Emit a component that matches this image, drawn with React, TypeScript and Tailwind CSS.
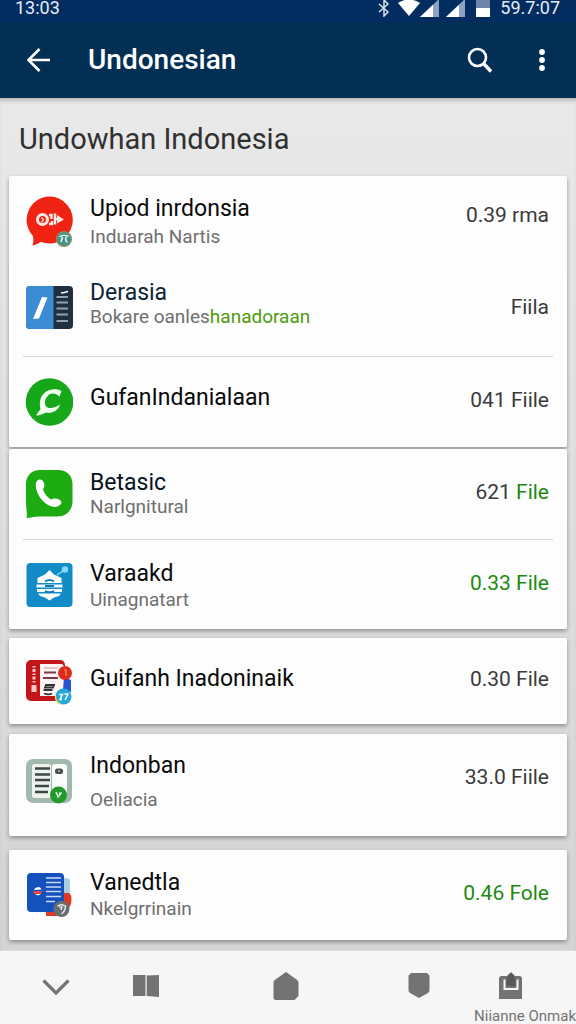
import React from "react";
import clsx from "clsx";

interface FileItem {
  id: string;
  title: string;
  subtitle?: React.ReactNode;
  value: React.ReactNode;
  icon: React.ReactNode;
  rowClass: string;
  textClass?: string;
  titleClass?: string;
  subtitleClass?: string;
  valueClass?: string;
}

const IconBox = ({ children }: { children: React.ReactNode }) => (
  <svg viewBox="0 0 48 52" className="h-[52px] w-12 shrink-0" aria-hidden="true">
    {children}
  </svg>
);

const RedChatIcon = () => (
  <IconBox>
    <path d="M24.500 1.500a23.500 23.500 0 1 1-9 45.300C13 49 10 50 7.500 50.500c1-3 1-7 .4-9.500A23.500 23.500 0 0 1 24.500 1.500z" fill="#f02312" />
    <circle cx="17.500" cy="24.500" r="5" fill="none" stroke="#ffe9e4" strokeWidth="3" />
    <path d="M16.500 22.500l2 2-2 3" fill="none" stroke="#ffe9e4" strokeWidth="1.200" />
    <path d="M24 20h2.500v4M24 29h3v-3M30 18.500v11M29 24h5" fill="none" stroke="#ffe9e4" strokeWidth="2.400" />
    <path d="M32 20l7 4.500-7 4z" fill="#ffe9e4" />
    <circle cx="39" cy="44" r="8" fill="#8a8c66" />
    <circle cx="39" cy="44" r="6.600" fill="#3f9488" />
    <path d="M34.500 42c2-2 6-2 9-.5M37.500 42l-1.500 5M41 42c-.5 2-.5 5 1.500 5" fill="none" stroke="#e4f3ec" strokeWidth="1.600" />
  </IconBox>
);

const NotebookIcon = () => (
  <IconBox>
    <rect x="1" y="5" width="47" height="43" rx="4" fill="#1f2f40" />
    <path d="M5 5h23.500v43H5a4 4 0 0 1-4-4V9a4 4 0 0 1 4-4z" fill="#3c8bd3" />
    <path d="M17 16l5.500.5L14 37.500 8 38z" fill="#fff" />
    <path d="M36 11.500c2 1 4-.5 7-1" fill="none" stroke="#fff" strokeWidth="1.500" />
    <path d="M31.500 16H43M31.500 21.500H43M31.500 27.500H43M31.500 33.500H43M31.500 40H43" stroke="#92a2b0" strokeWidth="1.800" />
  </IconBox>
);

const GreenSwirlIcon = () => (
  <IconBox>
    <circle cx="24.500" cy="26" r="23.800" fill="#17a81a" />
    <path d="M34.500 20.500l2-5.500c-4-2.500-11-2.500-16 1-5.500 4-6.500 11-5 17l-4.500 6.500c4 0 7-1.500 10-3 5 .8 10-.5 13-5.500l1-2.500c-3.500 2.500-8.500 4.500-12.500 3-4-2-3-9 1-12.500 3.500-2.500 7.500-1.500 11 1.500z" fill="#f3fff0" />
  </IconBox>
);

const PhoneBubbleIcon = () => (
  <IconBox>
    <path d="M15 2h18c9 0 14.500 6 14.500 14v17c0 9-6 15.500-15 15.500H14c-4 .2-9 1.300-12.500 1.500C2.500 46 1 40 1 34V16C1 8 6.500 2 15 2z" fill="#1cab10" />
    <path d="M12 13c2-2 5-2 6.500 1 1.300 3 1.300 5-.5 7 .8 4 4 8 8 10.500 2.500-1.500 5-1.500 8.500.2 2.500 1.500 2.500 3.500.5 5.300-3 2.500-7 2.500-11 .5C17 34 12.500 27 11 20c-.5-3-.5-5 1-7z" fill="#fff" />
  </IconBox>
);

const BlueBadgeIcon = () => (
  <IconBox>
    <rect x="1.500" y="4" width="46" height="44" rx="4" fill="#128bc6" />
    <path d="M24.500 11l4.500 4.500 7.500 3.500v5h-24v-5l7.500-3.500z" fill="#fff" />
    <path d="M11.500 25.500h26v3h-26zM12 30h25v3H12z" fill="#f0fbff" />
    <path d="M13 34.500h23l-2 2.500-5 1.500-4.500 3-4.500-3-5-1.500z" fill="#fff" />
    <path d="M20 22.500q4.500-3 9 0M20 27h9M20 32q4.500 2.500 9 0" fill="none" stroke="#167ab0" strokeWidth="1.800" />
    <path d="M32 16.500c1.500-3 3-1.500 5.500-4.500" fill="none" stroke="#6fd5f5" strokeWidth="1.600" />
    <circle cx="40" cy="10.500" r="3.200" fill="#7fdcf8" />
  </IconBox>
);

const RedPaperIcon = () => (
  <IconBox>
    <rect x="1" y="5" width="39" height="41" rx="5" fill="#c3161b" />
    <path d="M15 9h22l4 4v28H15z" fill="#fbf6f5" />
    <path d="M9 11v17" stroke="#f5c9c6" strokeWidth="3" strokeDasharray="1.500 1.500 3 1.500" />
    <path d="M6.500 30h5v7h-5z" fill="#f5c9c6" />
    <path d="M19 13h14" stroke="#d5a9a9" strokeWidth="1.200" />
    <path d="M19 17.500h12M18 23h15" stroke="#7d3b4a" strokeWidth="2" />
    <path d="M21 30h8l-1 2.500h-8zM18.500 35h9M19 38.500c3 1 6 1 8 0" fill="none" stroke="#333" strokeWidth="1.800" />
    <path d="M39 22l7 3v12l-8-2z" fill="#2b53cf" />
    <circle cx="40" cy="18" r="7" fill="#dc2c1d" />
    <path d="M39 15h2v6" fill="none" stroke="#f29a52" strokeWidth="1.200" />
    <circle cx="38.500" cy="41.500" r="8" fill="#22a7d8" />
    <path d="M30.500 41a8 8 0 0 0 5 8" fill="none" stroke="#e6d34c" strokeWidth="1.400" />
    <path d="M34 39.500h3.500l-2.500 5h2M39.500 39h3.500l-3 6" fill="none" stroke="#fff" strokeWidth="1.500" />
  </IconBox>
);

const GreyNewsIcon = () => (
  <IconBox>
    <rect x="1" y="4" width="46" height="44" rx="7" fill="#a4b9ad" />
    <rect x="7" y="9" width="19" height="34" rx="2" fill="#eef3ef" />
    <rect x="27" y="9" width="15" height="34" rx="3" fill="#fafcfa" />
    <path d="M10 13.500h15M10 19.500h15M10 25h15M10 31h14M10 37h13" stroke="#3d4743" strokeWidth="2.600" />
    <rect x="30" y="13.500" width="8" height="5.500" rx="2.500" fill="#4a4f4d" />
    <circle cx="34" cy="16" r="1" fill="#bbb" />
    <circle cx="33.500" cy="40" r="8.500" fill="#23992b" />
    <path d="M31 37l2 5 3.500-4.500M34 38l2 1" fill="none" stroke="#dff5dc" strokeWidth="1.500" />
  </IconBox>
);

const BlueDocsIcon = () => (
  <IconBox>
    <path d="M35 9h6a4 4 0 0 1 4 4v12H35z" fill="#a9cfe0" />
    <path d="M38 24h6c2.500 1.500 3 5 2 11l-4 8H21v4h14l3-4z" fill="#dc3b22" />
    <rect x="2" y="4" width="37" height="39" rx="4" fill="#1551bd" />
    <path d="M21 9h15M21 13.500h15M21 18h15M21 22.500h15M21 27.500h15M21 32.500h9" stroke="#c9dcf7" strokeWidth="1.400" />
    <path d="M9 21a4 4 0 0 1 7.500-.5z" fill="#fff" />
    <path d="M8 22h9l-1 3H9z" fill="#dc4a4d" />
    <path d="M10 25h6l-3 1.500z" fill="#fff" />
    <circle cx="36.500" cy="40" r="8" fill="#676e72" />
    <path d="M32.500 37l4-1.500 4 1.500c0 4-1.500 6-4 8" fill="none" stroke="#dfe3e5" strokeWidth="1.500" />
    <path d="M34 38h3l-1 3" fill="none" stroke="#fff" strokeWidth="1.200" />
  </IconBox>
);

// each entry is one white card
const CARDS: { id: string; className: string; items: FileItem[] }[] = [
  {
    id: "card-1",
    className: "",
    items: [
      {
        id: "upiod",
        title: "Upiod inrdonsia",
        subtitle: "Induarah Nartis",
        value: "0.39 rma",
        icon: <RedChatIcon />,
        rowClass: "h-[90px]",
        subtitleClass: "mt-1",
        valueClass: "pb-3",
      },
      {
        id: "derasia",
        title: "Derasia",
        titleClass: "text-[#0b2536]",
        subtitle: (
          <>
            Bokare oanles<span className="text-[#4d9a0b]">hanadoraan</span>
          </>
        ),
        value: "Fiila",
        icon: <NotebookIcon />,
        rowClass: "h-[90px] pb-2",
        textClass: "pb-2",
        valueClass: "pb-0",
      },
      {
        id: "gufan",
        title: "GufanIndanialaan",
        value: "041 Fiile",
        icon: <GreenSwirlIcon />,
        rowClass: "h-[91px] border-t",
        textClass: "pb-2",
      },
    ],
  },
  {
    id: "card-2",
    className: "mt-0.5",
    items: [
      {
        id: "betasic",
        title: "Betasic",
        titleClass: "text-[#07131d]",
        subtitle: "Narlgnitural",
        value: (
          <>
            621 <span className="text-[#1c8a10]">File</span>
          </>
        ),
        icon: <PhoneBubbleIcon />,
        rowClass: "h-[90px]",
        textClass: "pb-0.5",
      },
      {
        id: "varaakd",
        title: "Varaakd",
        subtitle: "Uinagnatart",
        value: <span className="text-[#1c8a10]">0.33 File</span>,
        icon: <BlueBadgeIcon />,
        rowClass: "h-[90px] border-t",
        subtitleClass: "mt-0.5",
      },
    ],
  },
  {
    id: "card-3",
    className: "mt-[9px]",
    items: [
      {
        id: "guifanh",
        title: "Guifanh Inadoninaik",
        value: "0.30 File",
        icon: <RedPaperIcon />,
        rowClass: "h-[86px]",
        textClass: "pb-1",
      },
    ],
  },
  {
    id: "card-4",
    className: "mt-2.5",
    items: [
      {
        id: "indonban",
        title: "Indonban",
        subtitle: "Oeliacia",
        value: "33.0 Fiile",
        icon: <GreyNewsIcon />,
        rowClass: "h-[102px] pb-2",
        subtitleClass: "mt-2.5",
        valueClass: "pb-2",
      },
    ],
  },
  {
    id: "card-5",
    className: "mt-3.5",
    items: [
      {
        id: "vanedtla",
        title: "Vanedtla",
        subtitle: "Nkelgrrinain",
        value: <span className="text-[#1c8a10]">0.46 Fole</span>,
        icon: <BlueDocsIcon />,
        rowClass: "h-[90px]",
        textClass: "pb-0.5",
        subtitleClass: "mt-0.5",
      },
    ],
  },
];

const SignalIcon = () => (
  <svg viewBox="0 0 20 18" className="h-[18px] w-5" aria-hidden="true">
    <path d="M0 18L19 0v18z" fill="#8ea3c4" />
    <path d="M0 18L13 5.700V18z" fill="#fff" />
  </svg>
);

function StatusBar() {
  return (
    <div className="flex h-[22px] items-center bg-[#032c61] pr-4 pb-1.5 pl-[15px] text-lg leading-4 text-[#e3ecf5]">
      <span className="flex-1">13:03</span>
      <svg viewBox="0 0 12 18" className="mr-2 h-[18px] w-3" aria-hidden="true">
        <path d="M1 5l9 8-4 4V1l4 4-9 8" fill="none" stroke="#d5e0ee" strokeWidth="1.500" />
      </svg>
      <svg viewBox="0 0 22 18" className="h-[18px] w-[22px]" aria-hidden="true">
        <path d="M0 4C6-.5 16-.5 22 4L11 17z" fill="#fff" />
      </svg>
      <SignalIcon />
      <span className="w-1.5" />
      <SignalIcon />
      <svg viewBox="0 0 14 18" className="mx-2.5 h-[18px] w-3.5" aria-hidden="true">
        <path d="M0 0h14v10H0z" fill="#6f84a8" />
        <path d="M0 9h14v9H0z" fill="#fff" />
      </svg>
      <span>59.7:07</span>
    </div>
  );
}

function AppBar() {
  return (
    <header className="flex h-[76px] items-center bg-[#032f55] pl-[26px] text-white">
      <button type="button" aria-label="Back">
        <svg viewBox="0 0 24 26" className="h-[26px] w-6" fill="none" stroke="currentColor" strokeWidth="2.600" aria-hidden="true">
          <path d="M13.500 2L2.500 13l11 11M2.500 13H24" />
        </svg>
      </button>
      <h1 className="ml-[38px] flex-1 pb-px text-[28px] leading-9 font-medium">Undonesian</h1>
      <button type="button" aria-label="Search">
        <svg viewBox="0 0 26 26" className="h-[26px] w-[26px]" fill="none" stroke="currentColor" aria-hidden="true">
          <circle cx="10.500" cy="10.500" r="8.500" strokeWidth="2.600" />
          <path d="M16.500 16.500l7.500 8" strokeWidth="3.400" />
        </svg>
      </button>
      <button type="button" aria-label="More options" className="mr-[29px] ml-11">
        <svg viewBox="0 0 10 26" className="h-[26px] w-2.5" fill="currentColor" aria-hidden="true">
          <circle cx="5" cy="5" r="2.900" />
          <circle cx="5" cy="13" r="2.900" />
          <circle cx="5" cy="21" r="2.900" />
        </svg>
      </button>
    </header>
  );
}

function FileRow({ item }: { item: FileItem }) {
  return (
    <li className={clsx("mx-3.5 flex items-center border-[#dadada] pr-1 pl-0.5", item.rowClass)}>
      {item.icon}
      <div className={clsx("ml-[17px] min-w-0 flex-1", item.textClass)}>
        <h3 className={clsx("text-[23px] leading-7 text-[#0a0a0a]", item.titleClass)}>{item.title}</h3>
        {item.subtitle && (
          <p className={clsx("text-[19px] leading-5 text-[#6f6f6f]", item.subtitleClass)}>{item.subtitle}</p>
        )}
      </div>
      <span className={clsx("text-[21px] leading-7 text-[#3a3a3a]", item.valueClass ?? "pb-1")}>{item.value}</span>
    </li>
  );
}

function BottomNav() {
  return (
    <nav className="border-t border-[#dcdcdc] bg-[#f6f6f6] pt-3 text-[#737373]">
      <div className="grid h-[45px] grid-cols-[112fr_68fr_212fr_54fr_130fr] items-center">
        <button type="button" aria-label="Collapse" className="flex justify-center">
          <svg viewBox="0 0 28 30" className="h-[30px] w-7" fill="none" stroke="currentColor" strokeWidth="3.200" aria-hidden="true">
            <path d="M1.500 9.500L14 22 26.500 9.500" />
          </svg>
        </button>
        <button type="button" aria-label="Library" className="flex justify-center">
          <svg viewBox="0 0 28 30" className="h-[30px] w-7" fill="currentColor" aria-hidden="true">
            <path d="M1 4h12.500v21H1zM14.700 4.500L27 4v22l-12.300-1z" />
          </svg>
        </button>
        <button type="button" aria-label="Home" className="flex justify-center">
          <svg viewBox="0 0 28 30" className="h-[30px] w-7" fill="currentColor" aria-hidden="true">
            <path d="M14 1l10.500 7.500c1.300 1 2 2 2 3.500v13l-4 4H4a2.500 2.500 0 0 1-2.500-2.500V12c0-1.500.7-2.500 2-3.500z" />
          </svg>
        </button>
        <button type="button" aria-label="Security" className="flex justify-center">
          <svg viewBox="0 0 28 30" className="h-[30px] w-7" fill="currentColor" aria-hidden="true">
            <path d="M6 2h16l2.500 2.500V19c0 1.500-.6 2.500-2 3.200L14 27l-8.500-4.800C4.100 21.500 3.500 20.500 3.500 19V4.500z" />
          </svg>
        </button>
        <button type="button" aria-label="Inbox" className="flex justify-center">
          <svg viewBox="0 0 28 30" className="h-[30px] w-7" fill="currentColor" aria-hidden="true">
            <path d="M14 1l4 4h4.500c1.500 0 2.500 1 2.500 2.500V28H2V7.500C2 6 3 5 4.500 5H10z" />
            <path d="M6.500 8.500V19h15V8.500h-2V17H8.500V8.500z" fill="#f6f6f6" />
            <path d="M14 2c3.500 2 4.500 5 4.500 8.500V15h-9v-4.500C9.500 7 10.500 4 14 2z" fill="#585858" />
          </svg>
        </button>
      </div>
      <p className="text-right text-[15px] leading-4 whitespace-nowrap">Niianne Onmak</p>
    </nav>
  );
}

export default function App() {
  return (
    <div className="flex min-h-screen flex-col bg-[#dedede] font-[Roboto,sans-serif]">
      <StatusBar />
      <AppBar />
      <main className="flex-1 bg-linear-to-b from-[#e9e9e9] to-[#d4d4d4] px-[9px] pb-[9px] shadow-[inset_0_5px_5px_-3px_rgba(0,0,0,0.25)]">
        <h2 className="px-2.5 pt-[25px] pb-[21px] text-[29px] leading-8 text-[#303030]">Undowhan Indonesia</h2>
        {CARDS.map((card) => (
          <ul
            key={card.id}
            className={clsx("rounded-xs bg-[#fdfdfd] shadow-[0_2px_4px_rgba(0,0,0,0.35)]", card.className)}
          >
            {card.items.map((item) => (
              <FileRow key={item.id} item={item} />
            ))}
          </ul>
        ))}
      </main>
      <BottomNav />
    </div>
  );
}
